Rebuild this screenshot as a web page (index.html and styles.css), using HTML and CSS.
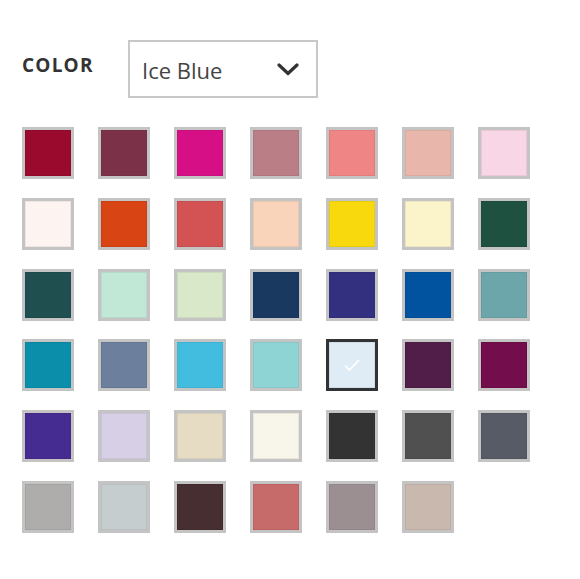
FILE: index.html
```html
<!DOCTYPE html>
<html lang="en">
<head>
  <meta charset="UTF-8" />
  <title>Color Picker</title>
  <link rel="stylesheet" href="styles.css">
</head>
<body>
  <div class="picker">
    <div class="picker-head">
      <span class="picker-label">COLOR</span>
      <div class="select">
        <span class="select-value">Ice Blue</span>
        <svg class="chevron" width="22" height="13" viewBox="0 0 22 13">
          <path d="M2 2 L11 10.5 L20 2" fill="none" stroke="#333" stroke-width="3.2" stroke-linecap="round" stroke-linejoin="round"/>
        </svg>
      </div>
    </div>

    <div class="swatches">
      <span class="swatch" style="background:#990a2c"></span>
      <span class="swatch" style="background:#7b3249"></span>
      <span class="swatch" style="background:#d60f87"></span>
      <span class="swatch" style="background:#b97e86"></span>
      <span class="swatch" style="background:#f08585"></span>
      <span class="swatch" style="background:#e9b6ab"></span>
      <span class="swatch" style="background:#f8d6e6"></span>

      <span class="swatch" style="background:#fdf3f1"></span>
      <span class="swatch" style="background:#d84414"></span>
      <span class="swatch" style="background:#d35253"></span>
      <span class="swatch" style="background:#fad4ba"></span>
      <span class="swatch" style="background:#f8d90d"></span>
      <span class="swatch" style="background:#fbf3c9"></span>
      <span class="swatch" style="background:#1f5141"></span>

      <span class="swatch" style="background:#1f4f4f"></span>
      <span class="swatch" style="background:#c1e8d7"></span>
      <span class="swatch" style="background:#d9e8c9"></span>
      <span class="swatch" style="background:#1a3961"></span>
      <span class="swatch" style="background:#33317f"></span>
      <span class="swatch" style="background:#0153a0"></span>
      <span class="swatch" style="background:#6ca6ab"></span>

      <span class="swatch" style="background:#0b8eaa"></span>
      <span class="swatch" style="background:#6c7f9d"></span>
      <span class="swatch" style="background:#43bddf"></span>
      <span class="swatch" style="background:#8fd4d4"></span>
      <span class="swatch selected" style="background:#dfebf5">
        <svg class="check" width="18" height="14" viewBox="0 0 18 14">
          <path d="M2 7.5 L6.5 12 L16 2" fill="none" stroke="#fff" stroke-width="1.6"/>
        </svg>
      </span>
      <span class="swatch" style="background:#511d49"></span>
      <span class="swatch" style="background:#730d4c"></span>

      <span class="swatch" style="background:#452c91"></span>
      <span class="swatch" style="background:#d6cfe6"></span>
      <span class="swatch" style="background:#e5dcc3"></span>
      <span class="swatch" style="background:#f8f6ea"></span>
      <span class="swatch" style="background:#333333"></span>
      <span class="swatch" style="background:#505050"></span>
      <span class="swatch" style="background:#575b66"></span>

      <span class="swatch" style="background:#afacac"></span>
      <span class="swatch" style="background:#c5cdcf"></span>
      <span class="swatch" style="background:#472e30"></span>
      <span class="swatch" style="background:#c76a6a"></span>
      <span class="swatch" style="background:#9b8f92"></span>
      <span class="swatch" style="background:#c9b8ae"></span>
    </div>
  </div>
</body>
</html>
```

FILE: styles.css
```css
body {
  margin: 0;
  background: #fff;
  font-family: 'Open Sans', sans-serif;
  color: #333;
}
.picker {
  padding: 40px 0 0 22px;
}
.picker-head {
  display: flex;
  align-items: center;
}
.picker-label {
  width: 106px;
  font-size: 19px;
  font-weight: 700;
  letter-spacing: 1.2px;
  color: #333;
  margin-top: -8px;
}
.select {
  box-sizing: border-box;
  width: 190px;
  height: 58px;
  border: 2px solid #c8c8c8;
  display: flex;
  align-items: center;
  justify-content: space-between;
  padding: 0 17px 0 12px;
}
.select-value {
  font-size: 22px;
  color: #444;
  margin-top: 2px;
}
.chevron {
  display: block;
  margin-top: 1px;
}
.swatches {
  margin-top: 29px;
  display: grid;
  grid-template-columns: repeat(7, 52px);
  column-gap: 24px;
  row-gap: 18.8px;
}
.swatch {
  box-sizing: border-box;
  width: 52px;
  height: 52px;
  border: 3px solid #c4c4c4;
  box-shadow: inset 0 0 0 1px rgba(0,0,0,0.06);
  display: flex;
  align-items: center;
  justify-content: center;
}
.swatch.selected {
  border-color: #333;
}
.check {
  display: block;
}
```
